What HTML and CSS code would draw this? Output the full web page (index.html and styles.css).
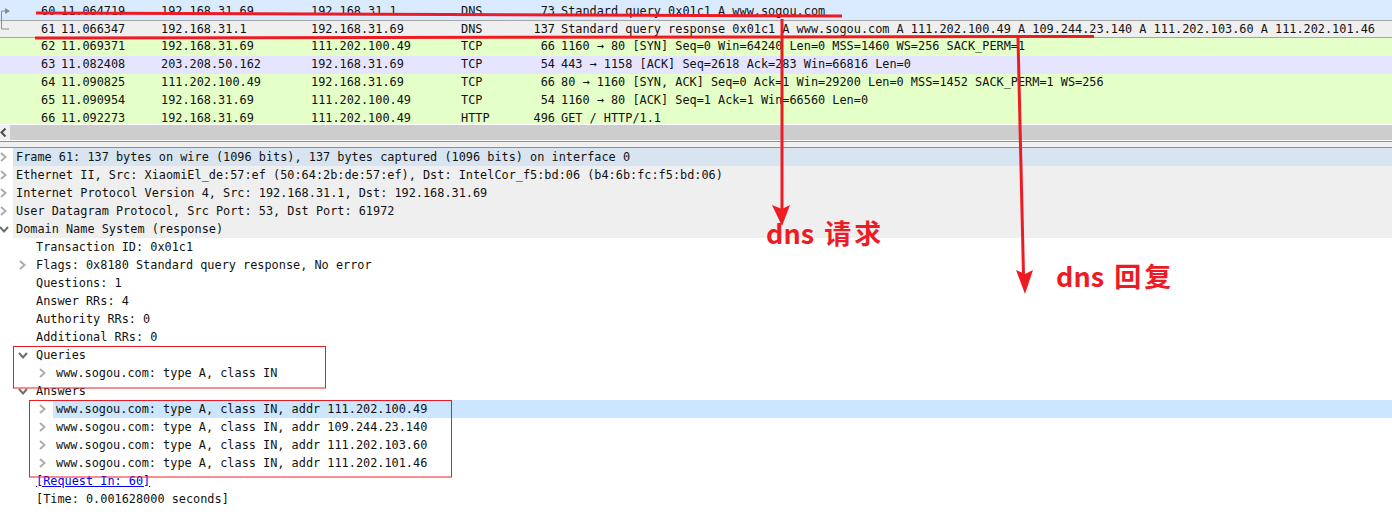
FILE: index.html
```html
<!DOCTYPE html>
<html lang="en">
<head>
<meta charset="utf-8">
<title>Wireshark DNS capture</title>
<link rel="stylesheet" href="styles.css">
</head>
<body>
<div class="app">
  <section class="packets">
    <div class="pkt dns first"><span>60</span><span>11.064719</span><span>192.168.31.69</span><span>192.168.31.1</span><span>DNS</span><span class="len">73</span><span>Standard query 0x01c1 A www.sogou.com</span></div>
    <div class="pkt sel"><span>61</span><span>11.066347</span><span>192.168.31.1</span><span>192.168.31.69</span><span>DNS</span><span class="len">137</span><span>Standard query response 0x01c1 A www.sogou.com A 111.202.100.49 A 109.244.23.140 A 111.202.103.60 A 111.202.101.46</span></div>
    <div class="pkt tcp"><span>62</span><span>11.069371</span><span>192.168.31.69</span><span>111.202.100.49</span><span>TCP</span><span class="len">66</span><span>1160 → 80 [SYN] Seq=0 Win=64240 Len=0 MSS=1460 WS=256 SACK_PERM=1</span></div>
    <div class="pkt purple"><span>63</span><span>11.082408</span><span>203.208.50.162</span><span>192.168.31.69</span><span>TCP</span><span class="len">54</span><span>443 → 1158 [ACK] Seq=2618 Ack=283 Win=66816 Len=0</span></div>
    <div class="pkt tcp"><span>64</span><span>11.090825</span><span>111.202.100.49</span><span>192.168.31.69</span><span>TCP</span><span class="len">66</span><span>80 → 1160 [SYN, ACK] Seq=0 Ack=1 Win=29200 Len=0 MSS=1452 SACK_PERM=1 WS=256</span></div>
    <div class="pkt tcp"><span>65</span><span>11.090954</span><span>192.168.31.69</span><span>111.202.100.49</span><span>TCP</span><span class="len">54</span><span>1160 → 80 [ACK] Seq=1 Ack=1 Win=66560 Len=0</span></div>
    <div class="pkt tcp last"><span>66</span><span>11.092273</span><span>192.168.31.69</span><span>111.202.100.49</span><span>HTTP</span><span class="len">496</span><span>GET / HTTP/1.1</span></div>
  </section>

  <div class="hscroll">
    <span class="left-btn"><svg width="8" height="15" viewBox="0 0 8 15"><path d="M5.5 3.5 L1.5 7.5 L5.5 11.5" fill="none" stroke="#4d4d4d" stroke-width="2"/></svg></span>
    <span class="track"></span>
  </div>
  <div class="splitter"></div>

  <section class="tree">
    <div class="row l0 focus"><svg class="chev" viewBox="0 0 10 10"><path d="M3 1 L7.5 5 L3 9"/></svg><span class="txt">Frame 61: 137 bytes on wire (1096 bits), 137 bytes captured (1096 bits) on interface 0</span></div>
    <div class="row l0 shade"><svg class="chev" viewBox="0 0 10 10"><path d="M3 1 L7.5 5 L3 9"/></svg><span class="txt">Ethernet II, Src: XiaomiEl_de:57:ef (50:64:2b:de:57:ef), Dst: IntelCor_f5:bd:06 (b4:6b:fc:f5:bd:06)</span></div>
    <div class="row l0 shade"><svg class="chev" viewBox="0 0 10 10"><path d="M3 1 L7.5 5 L3 9"/></svg><span class="txt">Internet Protocol Version 4, Src: 192.168.31.1, Dst: 192.168.31.69</span></div>
    <div class="row l0 shade"><svg class="chev" viewBox="0 0 10 10"><path d="M3 1 L7.5 5 L3 9"/></svg><span class="txt">User Datagram Protocol, Src Port: 53, Dst Port: 61972</span></div>
    <div class="row l0 shade"><svg class="chev open" viewBox="0 0 10 10"><path d="M1 3 L5 7.5 L9 3"/></svg><span class="txt">Domain Name System (response)</span></div>
    <div class="row l1"><span class="txt">Transaction ID: 0x01c1</span></div>
    <div class="row l1"><svg class="chev" viewBox="0 0 10 10"><path d="M3 1 L7.5 5 L3 9"/></svg><span class="txt">Flags: 0x8180 Standard query response, No error</span></div>
    <div class="row l1"><span class="txt">Questions: 1</span></div>
    <div class="row l1"><span class="txt">Answer RRs: 4</span></div>
    <div class="row l1"><span class="txt">Authority RRs: 0</span></div>
    <div class="row l1"><span class="txt">Additional RRs: 0</span></div>
    <div class="row l1"><svg class="chev open" viewBox="0 0 10 10"><path d="M1 3 L5 7.5 L9 3"/></svg><span class="txt">Queries</span></div>
    <div class="row l2"><svg class="chev" viewBox="0 0 10 10"><path d="M3 1 L7.5 5 L3 9"/></svg><span class="txt">www.sogou.com: type A, class IN</span></div>
    <div class="row l1"><svg class="chev open" viewBox="0 0 10 10"><path d="M1 3 L5 7.5 L9 3"/></svg><span class="txt">Answers</span></div>
    <div class="row l2 picked"><svg class="chev" viewBox="0 0 10 10"><path d="M3 1 L7.5 5 L3 9"/></svg><span class="txt">www.sogou.com: type A, class IN, addr 111.202.100.49</span></div>
    <div class="row l2"><svg class="chev" viewBox="0 0 10 10"><path d="M3 1 L7.5 5 L3 9"/></svg><span class="txt">www.sogou.com: type A, class IN, addr 109.244.23.140</span></div>
    <div class="row l2"><svg class="chev" viewBox="0 0 10 10"><path d="M3 1 L7.5 5 L3 9"/></svg><span class="txt">www.sogou.com: type A, class IN, addr 111.202.103.60</span></div>
    <div class="row l2"><svg class="chev" viewBox="0 0 10 10"><path d="M3 1 L7.5 5 L3 9"/></svg><span class="txt">www.sogou.com: type A, class IN, addr 111.202.101.46</span></div>
    <div class="row l1"><span class="txt link">[Request In: 60]</span></div>
    <div class="row l1"><span class="txt">[Time: 0.001628000 seconds]</span></div>
  </section>

  <svg class="gutter" width="12" height="32" viewBox="0 0 12 32">
    <path d="M1.5 11 H7 M1.5 11 V29 M1.5 29 H9" fill="none" stroke="#8c8c8c" stroke-width="1"/>
    <path d="M5 8 L10 11 L5 14 Z" fill="#8c8c8c"/>
  </svg>

  <svg class="ink" width="1392" height="520" viewBox="0 0 1392 520">
    <path class="line" d="M36 13 L842 16"/>
    <path class="line" d="M35 38 L1094 36.5"/>
    <path class="line" d="M782 19 L782 210"/>
    <path class="tip" d="M772 205 L782 209 L790 205 L782 226 Z"/>
    <path class="line" d="M1018 38 L1023.5 275"/>
    <path class="tip" d="M1016 270 L1025 274 L1033 270 L1025 294 Z"/>
    <rect class="box" x="13.5" y="346.5" width="312" height="41.5"/>
    <rect class="box" x="29.5" y="400.5" width="422" height="76.5"/>
  </svg>

  <div class="note note-a">dns <span class="cjk">请求</span></div>
  <div class="note note-b">dns <span class="cjk">回复</span></div>
</div>
</body>
</html>
```

FILE: styles.css
```css
html, body {
  margin: 0;
  padding: 0;
  background: #fff;
}
.app {
  position: relative;
  width: 1392px;
  height: 520px;
  overflow: hidden;
  font-family: "DejaVu Sans Mono", monospace;
  font-size: 11.86px;
  color: #111;
}
.packets {
  display: flex;
  flex-direction: column;
}
.pkt {
  display: grid;
  grid-template-columns: 20px 100px 150px 150px 72px 22px 1fr;
  height: 18px;
  line-height: 17px;
  padding-left: 41px;
  white-space: pre;
  box-sizing: border-box;
}
.pkt .len { text-align: right; }
.pkt span:last-child { padding-left: 6px; }
.dns { background: #daeaff; }
.tcp { background: #e4ffc7; }
.purple { background: #e6e5ff; }
.first {
  height: 20px;
  padding-top: 2px;
  line-height: 18px;
}
.sel {
  background: #efefef;
  height: 18px;
  line-height: 16px;
  border-top: 1px solid #a5a5a5;
  border-bottom: 1px solid #a5a5a5;
}
.last { height: 14px; overflow: hidden; }
.hscroll {
  display: flex;
  height: 15px;
  margin-top: 1px;
}
.left-btn {
  display: flex;
  align-items: center;
  width: 10px;
  background: #f0f0f0;
}
.track {
  flex: 1;
  background: #cdcdcd;
}
.splitter {
  height: 5px;
  margin-top: 1px;
  background: #f0f0f0;
  border-top: 1px solid #8f8f8f;
  border-bottom: 1px solid #8f8f8f;
}
.tree {
  display: flex;
  flex-direction: column;
}
.row {
  display: flex;
  align-items: center;
  height: 18px;
  white-space: pre;
  position: relative;
}
.txt { padding-left: 3px; }
.chev {
  position: absolute;
  top: 4px;
  width: 10px;
  height: 10px;
  fill: none;
  stroke: #adadad;
  stroke-width: 2;
}
.chev.open { stroke: #6e6e6e; }
.l0 { padding-left: 13px; }
.l0 .chev { left: -2px; }
.l0 .chev.open { left: -1px; }
.l1 { padding-left: 33px; }
.l1 .chev { left: 17px; }
.l1 .chev.open { left: 18px; }
.l2 { padding-left: 53px; }
.l2 .chev { left: 37px; }
.focus { background: linear-gradient(to right, #fff 13px, #d8e5f0 13px); }
.shade { background: linear-gradient(to right, #fff 13px, #efefef 13px); }
.picked { background: linear-gradient(to right, #fff 53px, #cce6ff 53px); }
.link {
  color: #0000ee;
  text-decoration: underline;
}
.gutter {
  position: absolute;
  left: 0;
  top: 0;
}
.ink {
  position: absolute;
  left: 0;
  top: 0;
  pointer-events: none;
}
.line {
  fill: none;
  stroke: #ed1c24;
  stroke-width: 3;
}
.tip { fill: #ed1c24; }
.box {
  fill: none;
  stroke: #ed1c24;
  stroke-width: 1;
}
.note {
  position: absolute;
  font-family: "Noto Sans CJK SC", "Noto Sans", sans-serif;
  font-weight: 700;
  font-size: 27px;
  line-height: 34px;
  word-spacing: 4px;
  color: #ed1c24;
  white-space: pre;
}
.cjk { letter-spacing: 3px; }
.note-a { left: 766px; top: 216px; }
.note-b { left: 1056px; top: 259px; }
```
